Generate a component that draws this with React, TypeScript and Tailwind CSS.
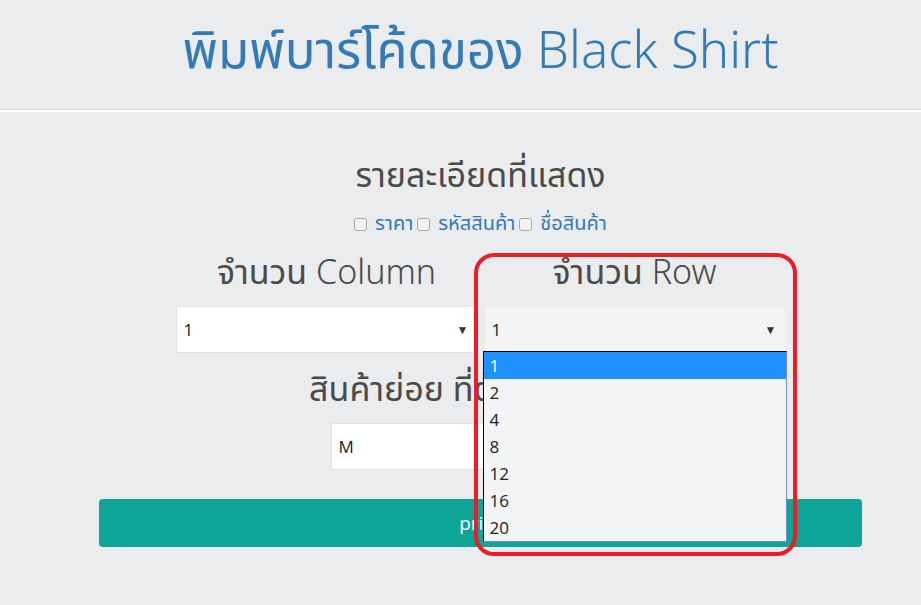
import React from "react";

const thai = { fontFamily: '"Noto Sans Thai", "Noto Sans", "Open Sans", sans-serif' };
const latin = { fontFamily: '"Open Sans", "Noto Sans", Arial, sans-serif' };

function Box() {
  return (
    <span className="inline-block w-[13px] h-[13px] rounded-[3px] border border-[#a9a9a9] bg-[#f4f4f4] shrink-0" />
  );
}

export default function App() {
  const opts = ["1", "2", "4", "8", "12", "16", "20"];
  return (
    <div className="w-[921px] h-[605px] bg-[#ebecee] overflow-hidden relative" style={thai}>
      <header className="h-[110px] flex items-center justify-center pl-[40px] border-b border-[#d6d7d9]">
        <h1 className="text-[51px] leading-none text-[#337ab7] pb-[4px]">
          <span className="font-normal">พิมพ์บาร์โค้ดของ</span>{" "}
          <span className="font-light">Black Shirt</span>
        </h1>
      </header>
      <div className="h-[2px] bg-white" />

      <main className="w-[763px] ml-[99px] flex flex-col items-center">
        <h2 className="mt-[44px] h-[40px] flex items-center text-[34px] text-[#4a4a4a] font-normal">รายละเอียดที่แสดง</h2>
        <div className="mt-[16px] h-[24px] flex items-center text-[20px] text-[#337ab7]">
          <Box />
          <span className="ml-[8px] mr-[4px]">ราคา</span>
          <Box />
          <span className="ml-[8px] mr-[4px]">รหัสสินค้า</span>
          <Box />
          <span className="ml-[8px]">ชื่อสินค้า</span>
        </div>

        <div className="mt-[17px] flex gap-[6px]">
          <div className="w-[302px] flex flex-col items-center">
            <h3 className="h-[40px] flex items-center text-[34px] text-[#4a4a4a]">
              <span className="font-normal">จำนวน</span>&nbsp;<span className="font-light">Column</span>
            </h3>
            <div className="mt-[13px] w-[302px] h-[47px] bg-white border border-[#e0e0e0] flex items-center justify-between pl-[7px] pr-[8px] text-[17px] text-[#222]" style={latin}>
              <span>1</span>
              <span className="text-[12px] text-[#333]">▼</span>
            </div>
          </div>
          <div className="w-[302px] flex flex-col items-center relative">
            <h3 className="h-[40px] flex items-center text-[34px] text-[#4a4a4a]">
              <span className="font-normal">จำนวน</span>&nbsp;<span className="font-light">Row</span>
            </h3>
            <div className="mt-[13px] w-[302px] h-[47px] bg-[#f3f4f6] border border-[#e8e9eb] flex items-center justify-between pl-[7px] pr-[8px] text-[17px] text-[#222]" style={latin}>
              <span>1</span>
              <span className="text-[12px] text-[#333]">▼</span>
            </div>
            <ul className="absolute left-[-1px] top-[98px] w-[304px] bg-[#f3f4f6] border border-black border-b-[#6f8fbf] border-r-[#6f8fbf] z-10 text-[17px] text-[#222]" style={latin}>
              {opts.map((o, i) => (
                <li key={o} className={`h-[27px] flex items-center pl-[6px] ${i === 0 ? "bg-[#1e90ff] text-white" : ""}`}>
                  {o}
                </li>
              ))}
            </ul>
          </div>
        </div>

        <h3 className="mt-[17px] h-[40px] flex items-center text-[34px] text-[#4a4a4a]">สินค้าย่อย ที่ต้องการพิมพ์</h3>
        <div className="mt-[13px] w-[300px] h-[47px] bg-white border border-[#e0e0e0] flex items-center pl-[7px] text-[17px] text-[#222]" style={latin}>
          M
        </div>

        <button className="mt-[29px] w-[763px] h-[48px] rounded-[4px] bg-[#0ca597] text-white text-[19px]" style={latin}>print</button>
      </main>

      <div className="absolute left-[474px] top-[253px] w-[323px] h-[303px] border-[4px] border-[#ee1c24] rounded-[20px] z-20 pointer-events-none" />
    </div>
  );
}
